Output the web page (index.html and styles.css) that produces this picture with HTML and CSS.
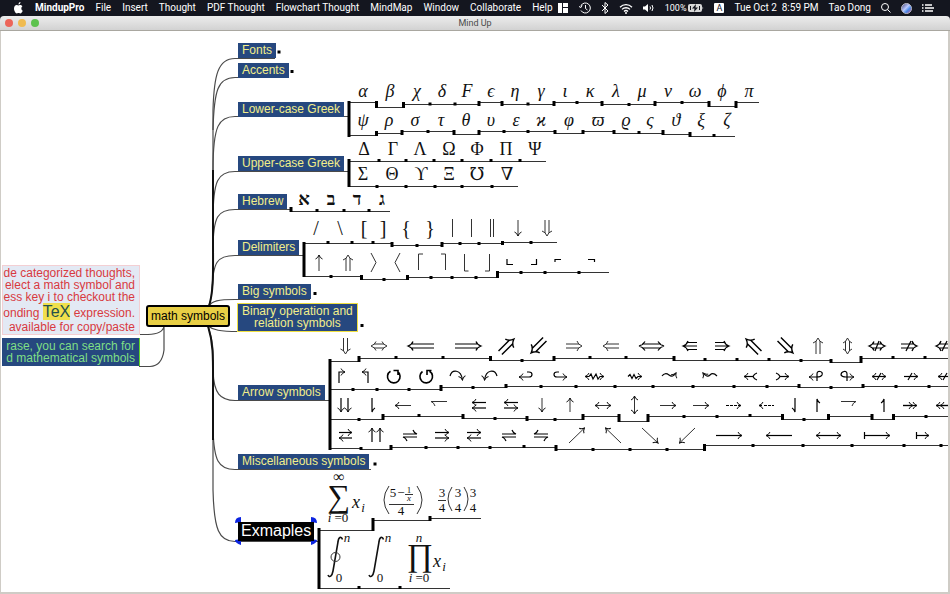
FILE: index.html
```html
<!DOCTYPE html>
<html lang="en">
<head>
<meta charset="utf-8">
<title>Mind Up</title>
<link rel="stylesheet" href="styles.css">
</head>
<body>
<header class="menubar">
  <nav class="menus">
    <svg class="apple" viewBox="0 0 10 12"><path d="M7 0C5.700.2 4.900 1.200 5 2.600 6.200 2.500 7 1.500 7 0ZM8.900 4.200C8.300 3.300 7.200 2.900 6.300 3c-.6.1-1 .4-1.400.4S4 3 3.300 3C1.600 3 .5 4.500.5 6.600.5 9 2 11.500 3.300 11.500c.6 0 .9-.4 1.700-.4s1 .4 1.700.4c1.100 0 2.100-1.600 2.500-2.700C7.600 8.200 7.300 5.300 8.900 4.200Z"/></svg>
    <a class="app" href="#">MindupPro</a>
    <a href="#">File</a>
    <a href="#">Insert</a>
    <a href="#">Thought</a>
    <a href="#">PDF Thought</a>
    <a href="#">Flowchart Thought</a>
    <a href="#">MindMap</a>
    <a href="#">Window</a>
    <a href="#">Collaborate</a>
    <a href="#">Help</a>
  </nav>
  <div class="status">
    <svg width="10" height="10" viewBox="0 0 10 10"><path fill="#fff" d="M0 0h4v10H0zM5 0h5v4H5zM5 5h5v5H5z"/></svg>
    <svg width="13" height="12" viewBox="0 0 13 12"><path class="ico" d="M3 3.500a5 5 0 1 1 0 5M1 4.500l2 1 1-2.500M7.500 3v3.500l2 1.500"/></svg>
    <svg width="8" height="12" viewBox="0 0 8 12"><path class="ico" d="M1 3l6 6-3 2.500V.5L7 3 1 9"/></svg>
    <svg width="14" height="11" viewBox="0 0 14 11"><path class="ico wide" d="M1 4.200a8.500 8.500 0 0 1 12 0M3 6.400a5.700 5.700 0 0 1 8 0M5 8.500a2.900 2.900 0 0 1 4 0"/><circle cx="7" cy="10" r="1" fill="#fff"/></svg>
    <svg width="12" height="10" viewBox="0 0 12 10"><path fill="#fff" d="M0 3.500h2L5 1v8L2 6.500H0z"/><path class="ico" d="M7 3.500q1 1.500 0 3M9 2q2 3 0 6"/></svg>
    <span class="battery">100%
      <svg width="16" height="8" viewBox="0 0 16 8"><rect width="14" height="8" rx="2" fill="#d8d8d8"/><path fill="#d8d8d8" d="M14.500 2.500q1.500 1.500 0 3z"/><path fill="#14161f" d="M8 0 4 4.500h2.500L6 8l4-4.500H7.500z"/><path stroke="#14161f" fill="none" d="M2.500 2V6M11.500 2V6"/></svg>
    </span>
    <span class="input-source">A</span>
    <span class="clock">Tue Oct 2&nbsp; 8:59 PM</span>
    <span>Tao Dong</span>
    <svg width="10" height="10" viewBox="0 0 10 10"><path class="ico" d="M7.500 4a3.500 3.500 0 1 1-7 0 3.500 3.500 0 0 1 7 0M6.500 6.500 9.500 9.500"/></svg>
    <svg width="11" height="11" viewBox="0 0 11 11"><defs><linearGradient id="siri" x1="0" y1="0" x2="1" y2="1"><stop offset="0" stop-color="#38366e"/><stop offset=".45" stop-color="#b9c8ff"/><stop offset=".65" stop-color="#4a8be8"/><stop offset="1" stop-color="#d0428c"/></linearGradient></defs><circle cx="5.500" cy="5.500" r="5" fill="url(#siri)" stroke="#b9b9c4"/></svg>
    <svg width="12" height="8" viewBox="0 0 12 8"><path class="ico wide" d="M0 1h1.500M0 4h1.500M0 7h1.500M3 1h7M3 4h9M3 7h8"/></svg>
  </div>
</header>

<div class="titlebar">
  <button class="light close" aria-label="Close"></button>
  <button class="light minimize" aria-label="Minimize"></button>
  <button class="light expand" aria-label="Zoom"></button>
  <h1>Mind Up</h1>
</div>

<main class="canvas">
  <div class="map">
    <svg class="drawing" width="950" height="594" viewBox="0 0 950 594">
      <defs>
        <marker id="head" viewBox="-5 -5 6 10" markerWidth="6" markerHeight="10" markerUnits="userSpaceOnUse" refX="0" refY="0" orient="auto-start-reverse"><path d="M-4-3.500Q-3-1 0 0Q-3 1-4 3.500" fill="none" stroke="#111" stroke-width="1"/></marker>
        <g id="double"><path d="M-8-2H5M-8 2H5M3-5Q4-1.500 8 0Q4 1.500 3 5"/></g>
        <g id="double-both"><path d="M-5-2H5M-5 2H5M3-4.500Q4-1.500 8 0Q4 1.500 3 4.500M-3-4.500Q-4-1.500-8 0Q-4 1.500-3 4.500"/></g>
        <g id="double-long"><path d="M-13-2H10M-13 2H10M8-4.500Q9-1.500 13 0Q9 1.500 8 4.500"/></g>
        <g id="triple"><path d="M-7-3.500H3M-7 0H6M-7 3.500H3M2-5Q3-1.500 7 0Q3 1.500 2 5"/></g>
      </defs>

      <!-- branches -->
      <g class="branch">
        <path d="M209 306C214 290 213 270 213 240V110C214 75 218 58.500 235 58.500H275"/>
        <path d="M213 130C214 90 218 77.500 235 77.500H288"/>
        <path d="M213 170C213 125 219 116.500 235 116.500H348"/>
        <path d="M213 220C213 180 218 171.500 235 171.500H348"/>
        <path d="M213 250C213 216 218 209.500 235 209.500H290"/>
        <path d="M212 290C213 262 217 255.500 235 255.500H303"/>
        <path d="M209 306C212 301 218 299.500 235 299.500H310"/>
        <path d="M208 326C213 330 220 331.500 238 331.500H358"/>
        <path d="M208 326C214 345 213 350 213 372C214 393 220 400.500 235 400.500H329"/>
        <path d="M213 360V430C214 460 218 469.500 235 469.500H371"/>
        <path d="M213 400V490C214 530 219 541.500 235 541.500H318"/>
        <path d="M2 334.500H148Q163 334 164 326V350Q162 366 150 366.500H139"/>
      </g>
      <path class="trunk" d="M209 306C214 290 213 270 213 240V170M208 326C214 345 213 360 213 400V440"/>

      <!-- row baselines -->
      <path class="rule" d="M350 102.500H376V107.500H403V104.500H479V102.500H502V104.500H554V102.500H602V104.500H655V102.500H709V106.500H736V102.500H759
        M350 135.500H376V133.500H402V131.500H454V134.500H479V131.500H555V133.500H583V131.500H614V133.500H663V134.500H690V136.500H735
        M350 161.500H546M350 186.500H518M290 211.500H390
        M303 243.500H392V245.500H442V243.500H502V242.500H557M303 276.500H361V279.500H407V277.500H497V272.500H609
        M329 361.500H359V358.500H490V360.500H554V358.500H674V360.500H831V362.500H861V358.500H948
        M329 389.500H441V387.500H506V386.500H799V387.500H863V386.500H948
        M329 419.500H383V416.500H463V418.500H527V419.500H583V416.500H619V421.500H648V416.500H782V419.500H828V416.500H872V419.500H893V416.500H948
        M329 448.500H361V449.500H391V447.500H556V449.500H704V445.500H948
        M318 530.500H373V520.500H430V518.500H481M318 588.500H450"/>
      <path class="tick" d="M349 101v36M349 159v28M304 242v35M330 359v91M319 528v61
        M376.500 101v7M403.500 102v6M430 102.500v3M455 102.500v3M479 101v5M502 101v5M528 102.500v3M554 101v5M577 101v3M602 101v5M629 103v3M655 101v5M682 101v3M709 101v6M736 101v7
        M376.500 131v5M402 130v5M428 130v3M454 130v5M479 130v5M504 130v3M528 130v3M555 130v4M583 130v4M614 130v4M639 131v3M663 130v5M690 132v5M714 134v3
        M379 159v3M406 159v3M434 159v3M462 159v3M491 159v3M520 159v3M377 185v3M406 185v3M435 185v3M462 185v3M492 185v3
        M291 207v5M317 209v3M344 209v3M369 209v3
        M328 241v3M352 241v3M373 241v3M392 242v5M417 244v3M442 242v5M460 242v3M479 242v3M502.500 241v4M531 241v3
        M331 275v3M361.500 275v5M384 278v3M407.500 275v5M431 276v3M452 276v3M476 276v3M497.500 271v7M521 271v3M545 271v3M579 271v3
        M359 356v6M396 356v3M443 356v3M490.500 356v5M522 359v3M554 356v5M590 356v3M626 356v3M674 356v5M705 358v3M737 358v3M769 358v3M801 359v3M831 359v4M861 356v7M893 356v3M925 356v3
        M353 388v3M377 388v3M409 388v3M441 385v6M473 386v3M506 384v4M541 385v3M576 385v3M615 385v3M653 385v3M693 385v3M734 385v3M767 385v3M799 384v4M831 386v3M863 384v4M896 385v3M929 385v3
        M359 418v3M383 414v6M419 414v3M463 414v5M495 417v3M527 416v5M555 418v3M583 414v6M619 414v8M648 414v8M684 415v3M717 415v3M750 414v3M782.500 414v6M804 418v3M828.500 414v6M872 414v6M893.500 414v6M926 415v3
        M361 447v3M391 445v5M426 446v3M458 446v3M490 446v3M524 445v3M556 445v6M593 448v3M630 448v3M667 448v3M704.500 444v7M753 444v3M803 444v3M852 444v3M904 444v3M941 444v3
        M373 518v13M430 516v5M359 586v3M400 586v3
        M279 50.500v3M292 70v3M315 292v3M362 324v3M375 462.500v3"/>

      <!-- letters -->
      <g class="math">
        <text class="it" y="97" x="363 390 417 442 467 491 515 541 565 590 616 642 668 695 722 749">αβχδFϵηγικλμνωϕπ</text>
        <text class="it" y="126" x="363 389 415 441 466 491 516 541 569 598 626 650 676 701 727">ψρστθυεϰφϖϱςϑξζ</text>
        <text y="155" x="364 393 420 449 477 506 535">ΔΓΛΩΦΠΨ</text>
        <text y="180" x="363 392 421 449 477 507">ΣΘϒΞ℧∇</text>
        <g class="hebrew-letters"><text y="205" x="304">א</text><text y="205" x="331">ב</text><text y="205" x="357">ד</text><text y="205" x="382">ג</text></g>
        <text class="delim" y="235" x="316 340 364 383 406 430">/\[]{}</text>
      </g>

      <!-- delimiters -->
      <g class="thin">
        <path d="M452.500 219V237M471.500 219V237M490.500 219V237M493.500 219V237"/>
        <path class="end" d="M518 220V236"/><use href="#double" transform="translate(547 228) rotate(90)"/>
        <path class="end" d="M319 271V255"/><use href="#double" transform="translate(348 263) rotate(-90)"/>
        <path d="M371 253 376 262.500 371 272M400 253 395 262.500 400 272M418.500 270V254H423M441 254H445.500V270M464.500 254V271H468.500M485 271H489.500V254"/>
      </g>
      <path class="bold" d="M507 259V264.500H513M531 264.500H536.500V259M555 262V259.500H561M588 259.500H594.500V262"/>

      <!-- arrows, first row -->
      <g class="thin">
        <use href="#double" transform="translate(345.500 346) rotate(90)"/>
        <use href="#double-both" transform="translate(379 346)"/>
        <use href="#double" transform="translate(574 346)"/>
        <use href="#double" transform="translate(611 346) rotate(180)"/>
        <use href="#double" transform="translate(818 346) rotate(-90)"/>
        <use href="#double-both" transform="translate(847.500 346) rotate(90)"/>
      </g>
      <g class="bold">
        <use href="#double-long" transform="translate(421 346) rotate(180)"/>
        <use href="#double-long" transform="translate(468 346)"/>
        <use href="#double" transform="translate(507 346) rotate(-45) scale(1.200)"/>
        <use href="#double" transform="translate(538 346) rotate(135) scale(1.200)"/>
        <path d="M642 344H661M642 348H661M658 341.500Q660 345 664 346Q660 347 658 350.500M645 341.500Q643 345 639 346Q643 347 645 350.500"/>
        <use href="#triple" transform="translate(690 346) rotate(180)"/>
        <use href="#triple" transform="translate(722 346)"/>
        <use href="#double" transform="translate(753 346) rotate(-135) scale(1.200)"/>
        <use href="#double" transform="translate(786 346) rotate(45) scale(1.200)"/>
        <use href="#double-both" transform="translate(877 346)"/><path d="M875 351 879 341"/>
        <use href="#double" transform="translate(909 346)"/><path d="M906 351 911 341"/>
        <use href="#double" transform="translate(944 346) rotate(180)"/><path d="M942 351 947 341"/>
      </g>

      <!-- second row -->
      <g class="bold">
        <path class="end" d="M339 383V372H345"/><path class="end" d="M368 383V372H362"/>
        <path class="heavy" d="M390.500 371.200A6.300 6.300 0 1 0 397.500 371.500M393.500 370.500H398V375M429.500 371.200A6.300 6.300 0 1 1 422.500 371.500M427 375V370.500H431.500"/>
        <path class="end" d="M450 376C452 369 461 369 462.500 380"/><path class="end" d="M497 376C495 369 486 369 484.500 380"/>
        <path class="end" d="M527 372H529Q532 372 532 374.500T529 377H519"/><path class="end" d="M559 372H557Q554 372 554 374.500T557 377H567"/>
        <path class="both" d="M585 376.500H589L591 374 593 379 596 374 598 379 600 376.500H604"/>
        <path class="end" d="M628 376.500 630 374.500 632 378.500 634 374.500 636 378.500 638 376.500H642"/>
        <path class="end" d="M662 376Q665 372 669 375T676 373"/><path class="end" d="M717 376Q713 372 710 375T703 373"/>
        <path class="start" d="M744 376.500H753"/><path class="end" d="M780 376.500H789"/>
        <path d="M757 373Q754 374 753 376.500Q754 379 757 380M776 373Q779 374 780 376.500Q779 379 776 380"/>
        <path class="end" d="M817 381V374Q817 371 820 371.500T822 375Q821 377 817 377H809"/><path class="end" d="M847 381V374Q847 371 844 371.500T841 375Q842 377 846 377H854"/>
        <path class="both" d="M872 376.500H886"/><path d="M877 380 881 373"/><path class="end" d="M904 376.500H918"/><path d="M908 380 912 373"/><path class="start" d="M938 376.500H952"/><path d="M943 380 947 373"/>
      </g>

      <!-- third row -->
      <g class="bold">
        <path class="end" d="M341 398V412"/><path class="end" d="M348 398V412"/>
        <path d="M372 398V412Q373 409 375 408"/>
        <path class="start" d="M472 402.500H486"/><path class="start" d="M472 408H486"/><path class="start" d="M504 402.500H518"/><path class="end" d="M504 408H518"/>
        <path class="end dash" d="M726 405.500H741"/><path class="start" d="M759 405.500H762"/><path class="dash" d="M764 405.500H774"/>
        <path d="M795 398V412Q794 409 792 408M817 412V399Q818 402 820 403M884 412V399Q883 402 881 403"/>
        <path class="end" d="M903 405.500H917"/><path class="end" d="M903 405.500H913"/><path class="start" d="M936 405.500H948"/><path class="start" d="M940 405.500H948"/>
      </g>
      <g class="thin">
        <path class="start" d="M395 405.500H411"/><path d="M447 401.500H431Q434 402.500 435 406"/>
        <path class="end" d="M542 398V412"/><path class="start" d="M570 398V412"/><path class="both" d="M595 405.500H611"/><path class="both" d="M634.500 396V414"/>
        <path class="end" d="M660 405.500H676"/><path class="end" d="M693 405.500H709"/><path d="M841 401.500H856Q853 402.500 852 406"/>
      </g>

      <!-- fourth row -->
      <g class="bold">
        <path class="end" d="M339 432.500H352"/><path class="start" d="M339 438H352"/><path class="start" d="M372 428V442"/><path class="start" d="M380 428V442"/>
        <path d="M403 434H417Q414 433 413 430M417 437H403Q406 438 407 441M502 434H516Q513 433 512 430M516 437H502Q505 438 506 441M548 434H534Q537 433 538 430M534 437H548Q545 438 544 441"/>
        <path class="end" d="M435 432.500H449"/><path class="end" d="M435 438H449"/><path class="end" d="M467 432.500H481"/><path class="start" d="M467 438H481"/>
        <path class="end" d="M716 435.500H742"/><path class="start" d="M766 435.500H792"/><path class="both" d="M816 435.500H841"/>
        <path class="end" d="M864.500 435.500H890"/><path class="end" d="M916.500 435.500H929"/><path d="M864.500 432V439M916.500 432V439"/>
      </g>
      <g class="thin">
        <path class="end" d="M569 443 584.500 428"/><path class="end" d="M621 443 605.500 428"/><path class="end" d="M642 428 658 443"/><path class="end" d="M695 428 679.500 443"/>
      </g>

      <!-- formulas -->
      <g class="math">
        <text class="big" x="339" y="507">∑</text><text class="medium" x="339" y="482">∞</text><text class="small" x="338" y="522"><tspan class="it">i</tspan> =0</text>
        <text class="it" x="356" y="508">x</text><text class="it small" x="363" y="512">i</text>
        <text class="small" x="393 401" y="497">5−</text><text class="tiny" x="409" y="493">1</text><text class="tiny it" x="409" y="501">x</text><text class="small" x="401" y="515">4</text>
        <text class="small" x="442 458 473" y="497">333</text><text class="small" x="442 458 473" y="512">444</text>
        <text class="it small" x="347 388 419" y="542">nnn</text><text class="small" x="339 380" y="582">00</text>
        <text class="big" x="420" y="566">∏</text><text class="small" x="419" y="582"><tspan class="it">i</tspan> =0</text>
        <text class="it" x="437" y="567">x</text><text class="it small" x="444" y="571">i</text>
      </g>
      <path class="fence" d="M389 486Q379 500 389 514M417 486Q427 500 417 514M452 487Q444 499 452 511M464 487Q472 499 464 511"/>
      <g class="integral">
        <path d="M342.500 539.500C341 536 338.500 537 338 542L333 571C332 576.500 329.500 578 328 575"/>
        <path d="M383.500 539.500C382 536 379.500 537 379 542L374 571C373 576.500 370.500 578 369 575"/>
        <circle class="thin" cx="335.500" cy="557" r="4.500"/>
      </g>
      <path class="rule" d="M405 494.500H413M389 504.500H414M438 500.500H446"/>
      <path class="grips" d="M241 522V517Q235 517 235 523ZM311 522V517Q317 517 317 523ZM241 539V545Q235 543 235 540ZM311 539V545Q317 543 317 540Z"/>
    </svg>

    <p class="note tip">de categorized thoughts,<br>elect a math symbol and<br>ess key i to checkout the<br>onding <mark>TeX</mark> expression.<br>available for copy/paste</p>
    <p class="note search">rase, you can search for<br>d mathematical symbols</p>
    <div class="root">math symbols</div>
    <div class="node fonts">Fonts</div>
    <div class="node accents">Accents</div>
    <div class="node lower">Lower-case Greek</div>
    <div class="node upper">Upper-case Greek</div>
    <div class="node hebrew">Hebrew</div>
    <div class="node delimiters">Delimiters</div>
    <div class="node bigsym">Big symbols</div>
    <div class="node binary">Binary operation and<br>relation symbols</div>
    <div class="node arrows">Arrow symbols</div>
    <div class="node misc">Miscellaneous symbols</div>
    <div class="node examples">Exmaples</div>
  </div>
</main>
</body>
</html>
```
FILE: styles.css
```css
* { box-sizing: border-box; }
body {
  margin: 0;
  min-height: 100vh;
  display: flex;
  flex-direction: column;
  overflow: hidden;
  background: #14161f;
  font-family: Roboto, "Liberation Sans", sans-serif;
}
.menubar {
  height: 16px;
  display: flex;
  align-items: center;
  justify-content: space-between;
  padding: 0 16px 0 13px;
  background: #14161f;
  color: #fff;
  font-size: 10px;
  line-height: 16px;
  white-space: nowrap;
}
.menus, .status { display: flex; align-items: center; gap: 11px; }
.status { gap: 10px; }
.menubar a { color: inherit; text-decoration: none; }
.menubar .app { font-weight: 700; }
.apple { width: 11px; height: 12px; fill: #fff; }
.ico { fill: none; stroke: #fff; stroke-width: 1; }
.wide { stroke-width: 1.3; }
.battery { display: flex; align-items: center; gap: 2px; font-size: 9px; }
.input-source {
  width: 10px;
  height: 10px;
  background: #fff;
  color: #14161f;
  border-radius: 1px;
  font-size: 9px;
  line-height: 10px;
  text-align: center;
}
.titlebar {
  height: 15px;
  display: flex;
  align-items: center;
  gap: 5px;
  padding-left: 5px;
  background: linear-gradient(#ececec, #d2d2d2);
  border-bottom: 1px solid #a9a7a0;
  border-radius: 4px 4px 0 0;
}
.light { width: 8px; height: 8px; padding: 0; border: 0; border-radius: 50%; }
.close { background: #ec6559; }
.minimize { background: #f0bb50; }
.expand { background: #5dc24f; }
.titlebar h1 {
  flex: 1;
  margin: 0;
  padding-right: 44px;
  text-align: center;
  color: #4b4b4b;
  font-size: 9px;
  font-weight: 400;
  line-height: 14px;
}
.canvas {
  flex: 1;
  overflow: hidden;
  background: #fff;
  border: solid #cfccc6;
  border-width: 0 2px 2px 1px;
}
/* map coordinates start at the top left of the screen */
.map { position: relative; margin: -31px 0 0 -1px; height: 592px; }
.drawing { position: absolute; left: 0; top: 0; }

.branch { fill: none; stroke: #4a4a4a; stroke-width: 1.200; }
.trunk { fill: none; stroke: #111; stroke-width: 2; }
.rule { fill: none; stroke: #333; stroke-width: 1; }
.tick { fill: none; stroke: #000; stroke-width: 3; }
.thin, .bold, .fence { fill: none; stroke: #333; stroke-width: 1; }
.bold { stroke: #000; stroke-width: 1.200; }
.heavy { stroke-width: 1.600; }
.integral { fill: none; stroke: #111; stroke-width: 1.600; }
.end, .both { marker-end: url(#head); }
.start, .both { marker-start: url(#head); }
.dash { stroke-dasharray: 3 1; }
.grips { fill: #0b24e0; }

.math text { font-family: "Liberation Serif", "DejaVu Serif", serif; font-size: 18px; text-anchor: middle; fill: #111; }
.math .it { font-style: italic; }
.math .medium { font-size: 16px; }
.math .small { font-size: 13px; }
.math .tiny { font-size: 9px; }
.math .delim { font-size: 20px; }
.math .big { font-size: 32px; }
.hebrew-letters text { font-weight: 700; }

.node, .root, .note {
  position: absolute;
  margin: 0;
  font: 12px/12px "Liberation Sans", Arial, sans-serif;
  white-space: nowrap;
}
.node {
  left: 238px;
  padding: 1px 4px 2px;
  background: #26487f;
  color: #f2ee8a;
  text-align: center;
}
.fonts { top: 43px; }
.accents { top: 63px; }
.lower { top: 102px; }
.upper { top: 156px; }
.hebrew { top: 194px; }
.delimiters { top: 240px; }
.bigsym { top: 284px; }
.node.binary { top: 303px; left: 237px; border: 1px solid #f0e040; }
.arrows { top: 385px; }
.misc { top: 454px; }
.node.examples { top: 522px; padding: 1px 3px 2px; background: #000; color: #fff; font-size: 16px; line-height: 16px; }
.root {
  left: 146px;
  top: 305px;
  padding: 2px 3px;
  background: #e8cf45;
  border: 2px solid #000;
  border-radius: 3px;
  color: #000;
  line-height: 14px;
}
.note { left: 2px; width: 138px; padding-right: 4px; text-align: right; }
.tip { top: 265px; padding-top: 1px; padding-bottom: 1px; background: #e3e9f4; border: 1px solid #f3cfd3; color: #d8393f; }
.tip mark { background: #f0df4c; color: #24504e; font-size: 16px; line-height: 18px; }
.search { top: 338px; padding-top: 2px; padding-bottom: 2px; background: #26487f; border-right: 1px solid #5dd62b; color: #7fdf85; }
```
